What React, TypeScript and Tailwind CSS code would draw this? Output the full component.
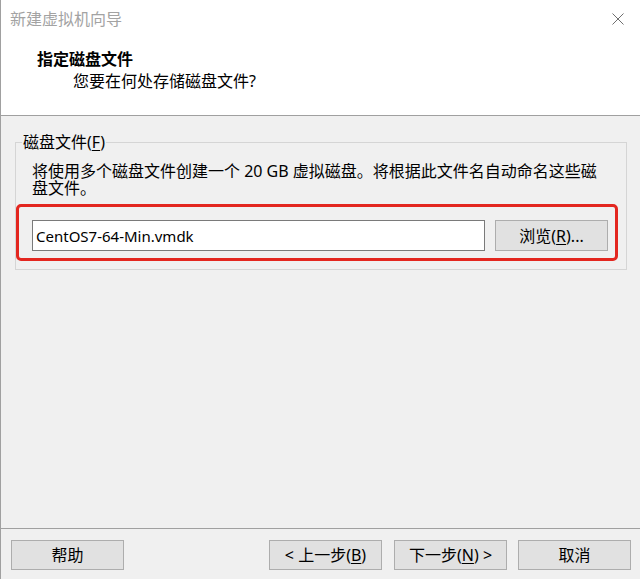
import React from 'react';

const font = { fontFamily: '"Noto Sans", "Noto Sans CJK SC", sans-serif' };

const Btn: React.FC<{ children: React.ReactNode; className?: string }> = ({ children, className }) => (
  <button
    className={`h-[30px] w-[113px] bg-[#e1e1e1] border border-[#adadad] text-[16px] leading-none text-black flex items-center justify-center ${className ?? ''}`}
  >
    {children}
  </button>
);

const App: React.FC = () => {
  return (
    <div className="w-[640px] h-[579px] flex flex-col bg-[#f0f0f0] border-l border-[#a0a0a0] overflow-hidden" style={font}>
      {/* header */}
      <div className="h-[116px] bg-white border-b border-[#a0a0a0] flex flex-col shrink-0">
        <div className="h-[38px] flex items-center justify-between pl-[9px] pr-[16px]">
          <span className="text-[16px] text-[#a3a3a3]">新建虚拟机向导</span>
          <svg width="12" height="12" viewBox="0 0 12 12" className="mt-[-1px]">
            <path d="M0.5 0.5 L11.5 11.5 M11.5 0.5 L0.5 11.5" stroke="#6f6f6f" strokeWidth="1" fill="none" />
          </svg>
        </div>
        <div className="pl-[36px] pt-[10px]">
          <div className="text-[16px] font-bold leading-[22px] text-black">指定磁盘文件</div>
          <div className="pl-[36px] text-[16px] leading-[22px] text-black">您要在何处存储磁盘文件?</div>
        </div>
      </div>

      {/* body */}
      <div className="flex-1 pt-[16px]">
        <fieldset className="ml-[14px] mr-[13px] border border-[#d5d5d5] pb-[8px]">
          <legend className="ml-[6px] px-[1px] text-[16px] leading-[20px] text-black">
            磁盘文件(<span className="underline underline-offset-2">F</span>)
          </legend>
          <p className="pl-[16px] pr-[26px] pt-[11px] text-[16px] leading-[17px] text-black">
            将使用多个磁盘文件创建一个 20 GB 虚拟磁盘。将根据此文件名自动命名这些磁盘文件。
          </p>
          <div className="mt-[7px] mr-[8px] border-[3px] border-[#e3261f] rounded-[5px] flex items-center gap-[10px] pl-[13px] pr-[7px] pt-[13px] pb-[7px]">
            <input
              readOnly
              value="CentOS7-64-Min.vmdk"
              className="h-[31px] flex-1 bg-white border border-[#7a7a7a] px-[3px] text-[15px] text-black outline-none"
              style={font}
            />
            <Btn className="w-[109px] h-[31px]">
              浏览(<span className="underline underline-offset-2">R</span>)...
            </Btn>
          </div>
        </fieldset>
      </div>

      {/* footer */}
      <div className="h-[51px] border-t border-[#a0a0a0] shrink-0 flex items-start pt-[11px] pl-[10px] pr-[9px]">
        <Btn>帮助</Btn>
        <div className="flex-1" />
        <Btn>&lt; 上一步(<span className="underline underline-offset-2">B</span>)</Btn>
        <Btn className="ml-[12px]">下一步(<span className="underline underline-offset-2">N</span>) &gt;</Btn>
        <Btn className="ml-[11px]">取消</Btn>
      </div>
    </div>
  );
};

export default App;
